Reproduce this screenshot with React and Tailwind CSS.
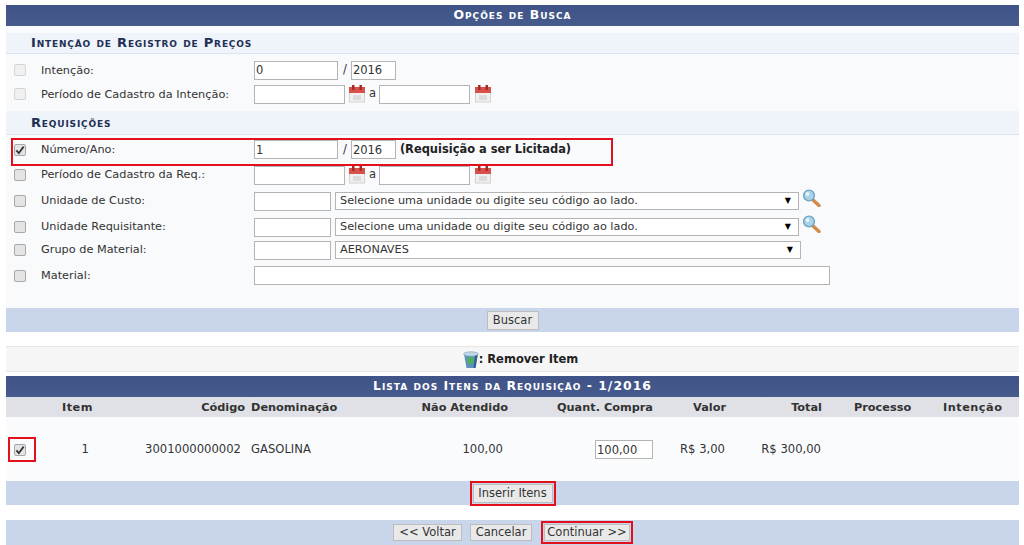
import React from "react";

const font = "font-['DejaVu_Sans','Liberation_Sans',sans-serif]";
const inputCls = "h-[19px] border border-[#b4b4b4] bg-white px-px text-[11.5px] text-[#333] outline-none";

const CheckBox = ({ checked, faded }) => (
  <span className={`flex h-[12px] w-[12px] shrink-0 items-center justify-center rounded-[2px] border ${faded ? "border-[#d4d4d4] bg-[#f0f0f0]" : "border-[#a8a8a8] bg-[#e4e4e4]"}`}>
    {checked && (
      <svg width="10" height="10" viewBox="0 0 11 11">
        <path d="M1.5 6 L4.2 9 L9.5 1.8" fill="none" stroke="#333" strokeWidth="2" />
      </svg>
    )}
  </span>
);

const Calendar = () => (
  <svg width="16" height="18" viewBox="0 0 16 18" className="shrink-0">
    <rect x="0.5" y="3" width="15" height="14" fill="#f0f0f0" stroke="#d2d2d2" />
    <rect x="0" y="2" width="16" height="6" fill="#d8504a" />
    <rect x="3" y="0" width="2.5" height="5" fill="#a52a26" />
    <rect x="10.5" y="0" width="2.5" height="5" fill="#a52a26" />
    <rect x="4" y="10" width="8" height="5" fill="#dcdcdc" />
  </svg>
);

const Magnifier = () => (
  <svg width="19" height="18" viewBox="0 0 19 18" className="shrink-0">
    <path d="M10.5 10.5 L17 16.5" stroke="#d08a4a" strokeWidth="3.4" strokeLinecap="round" />
    <circle cx="7" cy="6.5" r="5.4" fill="#a9d3ea" stroke="#6fa3c4" strokeWidth="1.4" />
    <circle cx="5.5" cy="5" r="2" fill="#e4f3fb" />
  </svg>
);

const Trash = () => (
  <svg width="16" height="18" viewBox="0 0 16 18" className="shrink-0">
    <path d="M1 3 L15 3 L12.5 17 L3.5 17 Z" fill="#5f93bd" />
    <ellipse cx="8" cy="3" rx="7.5" ry="2.2" fill="#c3d8e6" stroke="#7a9fbc" strokeWidth="0.6" />
    <circle cx="7.5" cy="9.5" r="3.4" fill="#4fae5a" />
    <path d="M12 5 L14.5 4 L12.5 17 L10.5 17 Z" fill="#2d5e92" />
  </svg>
);

const Select = ({ width, children }) => (
  <div className={`${width} flex h-[18px] shrink-0 items-center justify-between border border-[#b4b4b4] bg-white pl-[4px] pr-[7px] text-[11.25px] text-[#333]`}>
    <span>{children}</span>
    <span className="text-[8px] text-black">▼</span>
  </div>
);

const Row = ({ label, height, faded, checked, children }) => (
  <div className={`${height} relative flex items-center`}>
    <div className="ml-[8px] w-[27px] shrink-0">
      <CheckBox checked={checked} faded={faded} />
    </div>
    <div className={`w-[213px] shrink-0 text-[11.3px] text-[#333] ${faded ? "pt-[3px]" : "pt-[1px]"}`}>{label}</div>
    <div className="flex items-center">{children}</div>
  </div>
);

const Section = ({ children, height }) => (
  <div className={`${height} flex items-center border-b border-[#dbe3f0] bg-[#eff3fa] pl-[25px] text-[13px] font-bold tracking-[0.83px] text-[#222f55] [font-variant:small-caps]`}>
    {children}
  </div>
);

const Bar = ({ children, className }) => (
  <div className={`flex items-center justify-center bg-gradient-to-b from-[#3f5388] to-[#465a8c] text-[12.4px] font-bold tracking-[1px] text-white [font-variant:small-caps] ${className}`}>
    {children}
  </div>
);

const Button = ({ children, className }) => (
  <button className={`flex items-center justify-center border border-[#bdbdbd] bg-[#e9e9e9] text-[11.5px] text-[#333] ${className}`}>
    {children}
  </button>
);

const Th = ({ children, className }) => (
  <th className={`p-0 pt-[2px] text-[11.3px] font-bold text-[#333] ${className}`}>{children}</th>
);

const Td = ({ children, className }) => (
  <td className={`p-0 pt-[1px] text-[11.6px] text-[#333] ${className}`}>{children}</td>
);

const App = () => {
  return (
    <div className={`${font} h-[545px] w-[1024px] overflow-hidden bg-white pl-[6px] pr-[5px] pt-[5px]`}>
      <Bar className="h-[21px]">Opções de Busca</Bar>

      <div className="bg-[#f9fafc] pt-[7px]">
        <Section height="h-[21px]">Intenção de Registro de Preços</Section>
        <div className="pt-[4px]">
          <Row label="Intenção:" height="h-[24px]" faded>
            <input defaultValue="0" className={`${inputCls} w-[84px]`} />
            <span className="ml-[5px] mr-[4px] text-[11.5px] text-[#333]">/</span>
            <input defaultValue="2016" className={`${inputCls} w-[45px]`} />
          </Row>
          <Row label="Período de Cadastro da Intenção:" height="h-[24px]" faded>
            <input className={`${inputCls} w-[91px]`} />
            <span className="ml-[4px]"><Calendar /></span>
            <span className="ml-[4px] mr-[3px] text-[11.5px] text-[#333]">a</span>
            <input className={`${inputCls} w-[91px]`} />
            <span className="ml-[5px]"><Calendar /></span>
          </Row>
        </div>
        <div className="mt-[5px]">
          <Section height="h-[24px]">Requisições</Section>
        </div>
        <div className="pt-[2px]">
          <Row label="Número/Ano:" height="h-[25px]" checked>
            <input defaultValue="1" className={`${inputCls} w-[84px]`} />
            <span className="ml-[5px] mr-[4px] text-[11.5px] text-[#333]">/</span>
            <input defaultValue="2016" className={`${inputCls} w-[45px]`} />
            <span className="ml-[4px] text-[11.45px] font-bold text-[#222]">(Requisição a ser Licitada)</span>
            <span className="absolute left-[5px] top-[1px] h-[28px] w-[602px] border-2 border-[#e3101c]" />
          </Row>
          <Row label="Período de Cadastro da Req.:" height="h-[26px]">
            <input className={`${inputCls} w-[91px]`} />
            <span className="ml-[4px]"><Calendar /></span>
            <span className="ml-[4px] mr-[3px] text-[11.5px] text-[#333]">a</span>
            <input className={`${inputCls} w-[91px]`} />
            <span className="ml-[5px]"><Calendar /></span>
          </Row>
          <Row label="Unidade de Custo:" height="h-[26px]">
            <input className={`${inputCls} w-[77px]`} />
            <span className="ml-[4px]"><Select width="w-[464px]">Selecione uma unidade ou digite seu código ao lado.</Select></span>
            <span className="-mt-[6px] ml-[3px]"><Magnifier /></span>
          </Row>
          <Row label="Unidade Requisitante:" height="h-[26px]">
            <input className={`${inputCls} w-[77px]`} />
            <span className="ml-[4px]"><Select width="w-[464px]">Selecione uma unidade ou digite seu código ao lado.</Select></span>
            <span className="-mt-[6px] ml-[3px]"><Magnifier /></span>
          </Row>
          <Row label="Grupo de Material:" height="h-[20px]">
            <input className={`${inputCls} w-[77px]`} />
            <span className="ml-[4px]"><Select width="w-[466px]">AERONAVES</Select></span>
          </Row>
          <Row label="Material:" height="h-[31px]">
            <input className={`${inputCls} w-[576px]`} />
          </Row>
        </div>
        <div className="h-[17px]" />
      </div>

      <div className="flex h-[24px] items-center justify-center bg-[#c8d5ea]">
        <Button className="h-[19px] w-[52px] pt-[1px]">Buscar</Button>
      </div>

      <div className="mt-[14px] flex h-[26px] items-center justify-center border-y border-[#e6e6e6] bg-[#f6f6f6] pl-[16px] pt-[2px] text-[11.5px] font-bold text-[#222]">
        <Trash />
        <span>: Remover Item</span>
      </div>

      <Bar className="mt-[4px] h-[21px]">Lista dos Itens da Requisição - 1/2016</Bar>

      <table className="w-[1013px] table-fixed">
        <thead>
          <tr className="h-[20px] bg-[#dfe1e6]">
            <Th className="w-[34px]" />
            <Th className="w-[57px] pr-[4px] text-right tracking-[0.5px]">Item</Th>
            <Th className="w-[152px] pr-[4px] text-right">Código</Th>
            <Th className="w-[151px] pl-[2px] text-left">Denominação</Th>
            <Th className="w-[112px] pr-[4px] text-right">Não Atendido</Th>
            <Th className="w-[145px] pr-[4px] text-right">Quant. Compra</Th>
            <Th className="w-[73px] pr-[4px] text-right">Valor</Th>
            <Th className="w-[96px] pr-[4px] text-right">Total</Th>
            <Th className="w-[99px] pl-[28px] text-left">Processo</Th>
            <Th className="pl-[18px] text-left tracking-[0.5px]">Intenção</Th>
          </tr>
        </thead>
        <tbody>
          <tr className="h-[64px] bg-[#fafbfd]">
            <Td>
              <div className="relative ml-[8px] w-[12px]">
                <CheckBox checked />
                <span className="absolute -left-[6px] -top-[7px] h-[25px] w-[28px] border-2 border-[#e3101c]" />
              </div>
            </Td>
            <Td className="pr-[8px] text-right">1</Td>
            <Td className="pr-[8px] text-right">3001000000002</Td>
            <Td className="pl-[2px]">GASOLINA</Td>
            <Td className="pr-[9px] text-right">100,00</Td>
            <Td className="pr-[4px] text-right">
              <input defaultValue="100,00" className={`${inputCls} w-[58px]`} />
            </Td>
            <Td className="pr-[5px] text-right">R$ 3,00</Td>
            <Td className="pr-[5px] text-right">R$ 300,00</Td>
            <Td />
            <Td />
          </tr>
        </tbody>
      </table>

      <div className="flex h-[24px] items-center justify-center bg-[#c8d5ea]">
        <Button className="h-[19px] w-[80px] pt-[2px] outline-2 outline-offset-1 outline-[#e3101c]">Inserir Itens</Button>
      </div>

      <div className="mt-[15px] flex h-[25px] items-center justify-center bg-[#c8d5ea] pr-[2px]">
        <Button className="h-[17px] w-[69px] pt-[1px]">{"<< Voltar"}</Button>
        <Button className="ml-[8px] h-[17px] w-[62px] pt-[1px]">Cancelar</Button>
        <Button className="ml-[12px] h-[17px] w-[86px] pt-[1px] outline-2 outline-offset-1 outline-[#e3101c]">{"Continuar >>"}</Button>
      </div>
    </div>
  );
};

export default App;
